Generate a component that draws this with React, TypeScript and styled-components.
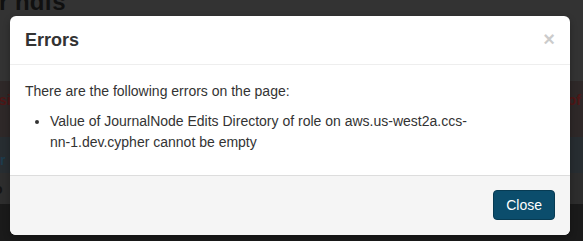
import React from "react";
import styled, { createGlobalStyle } from "styled-components";

const GlobalStyle = createGlobalStyle`
  html, body {
    margin: 0;
    padding: 0;
  }
  body {
    font-family: "Liberation Sans", Helvetica, Arial, sans-serif;
    font-size: 14px;
    line-height: 20px;
    color: #333333;
    background-color: #1a1a1a;
  }
`;

const Page = styled.div`
  position: relative;
  display: flex;
  flex-direction: column;
  width: 583px;
  height: 241px;
  overflow: hidden;
  background-color: #1a1a1a;
`;

const PageHeader = styled.div`
  height: 81px;
  overflow: hidden;
  background-color: #333333;
`;

const PageTitle = styled.h1`
  margin: -10px 0 0 -1px;
  font-size: 24px;
  line-height: 24px;
  font-weight: bold;
  color: #101010;
`;

const Band = styled.div<{ $bg: string; $fg: string; $height: number; $pad: number }>`
  display: flex;
  justify-content: space-between;
  align-items: flex-start;
  height: ${(p) => p.$height}px;
  padding-top: ${(p) => p.$pad}px;
  box-sizing: border-box;
  overflow: hidden;
  background-color: ${(p) => p.$bg};
  color: ${(p) => p.$fg};
  font-weight: bold;
  font-size: 14px;
  line-height: 20px;
`;

const BandText = styled.span<{ $shift: number }>`
  margin: 0 ${(p) => (p.$shift < 0 ? -p.$shift : 0)}px 0 ${(p) => (p.$shift > 0 ? -p.$shift : 0)}px;
`;

const Filler = styled.div`
  flex: 1;
  background-color: #1a1a1a;
`;

const Modal = styled.div`
  position: absolute;
  top: 16px;
  left: 10px;
  width: 560px;
  background-color: #ffffff;
  border-radius: 6px;
  box-shadow: 0 3px 7px rgba(0, 0, 0, 0.3);
  overflow: hidden;
`;

const ModalHeader = styled.div`
  display: flex;
  justify-content: space-between;
  align-items: flex-start;
  padding: 9px 15px;
  border-bottom: 1px solid #eeeeee;
`;

const ModalTitle = styled.h3`
  margin: 0;
  font-size: 18px;
  line-height: 30px;
  font-weight: bold;
  color: #333333;
`;

const CloseX = styled.button`
  margin-top: 4px;
  padding: 0;
  border: 0;
  background: transparent;
  font-family: "Liberation Sans", Arial, sans-serif;
  font-size: 20px;
  font-weight: bold;
  line-height: 20px;
  color: #000000;
  opacity: 0.2;
  cursor: pointer;
`;

const ModalBody = styled.div`
  padding: 16px 15px 12px;
`;

const Paragraph = styled.p`
  margin: 0 0 10px;
`;

const ErrorList = styled.ul`
  margin: 0 0 10px 25px;
  padding: 0;
  line-height: 21px;
`;

const NoWrap = styled.span`
  white-space: nowrap;
`;

const ModalFooter = styled.div`
  display: flex;
  justify-content: flex-end;
  padding: 14px 15px 15px;
  background-color: #f5f5f5;
  border-top: 1px solid #dddddd;
`;

const PrimaryButton = styled.button`
  padding: 4px 12px;
  font-family: "Liberation Sans", Helvetica, Arial, sans-serif;
  font-size: 14px;
  line-height: 20px;
  color: #ffffff;
  background-color: #0b4d6c;
  border: 1px solid #073b53;
  border-radius: 4px;
  cursor: pointer;
`;

export default function App() {
  return (
    <>
      <GlobalStyle />
      <Page>
        <PageHeader>
          <PageTitle>r hdfs</PageTitle>
        </PageHeader>
        <Band $bg="#2e2828" $fg="#4f1616" $height={56} $pad={9}>
          <BandText $shift={1}>si</BandText>
          <BandText $shift={-2}>of</BandText>
        </Band>
        <Band $bg="#272d31" $fg="#1d3b4d" $height={36} $pad={13}>
          <BandText $shift={0}>r</BandText>
        </Band>
        <Band $bg="#2d2d2d" $fg="#141414" $height={31} $pad={6}>
          <BandText $shift={6}>o</BandText>
        </Band>
        <Filler />

        <Modal>
          <ModalHeader>
            <ModalTitle>Errors</ModalTitle>
            <CloseX aria-label="Close">×</CloseX>
          </ModalHeader>
          <ModalBody>
            <Paragraph>There are the following errors on the page:</Paragraph>
            <ErrorList>
              <li>
                Value of JournalNode Edits Directory of role on aws.us-west2a.ccs-
                <NoWrap>nn-1.dev.cypher</NoWrap> cannot be empty
              </li>
            </ErrorList>
          </ModalBody>
          <ModalFooter>
            <PrimaryButton>Close</PrimaryButton>
          </ModalFooter>
        </Modal>
      </Page>
    </>
  );
}
